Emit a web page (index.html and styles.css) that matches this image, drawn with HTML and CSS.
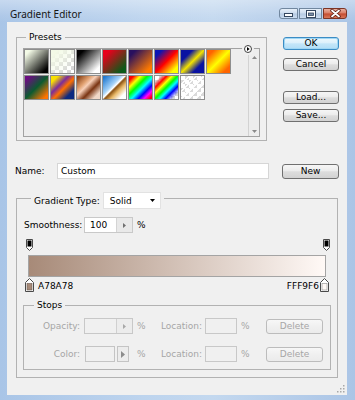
FILE: index.html
```html
<!DOCTYPE html>
<html lang="en">
<head>
<meta charset="utf-8">
<title>Gradient Editor</title>
<link rel="stylesheet" href="styles.css">
</head>
<body>
<div class="window">
  <div class="titlebar">
    <span class="title">Gradient Editor</span>
    <div class="caption-buttons">
      <span class="cap cap-min"><svg width="9" height="4" viewBox="0 0 9 4"><rect x="0.5" y="0.5" width="8" height="3" fill="#fff" stroke="#34465f"/></svg></span>
      <span class="cap cap-max"><svg width="10" height="8" viewBox="0 0 10 8"><rect x="0.5" y="0.5" width="9" height="7" fill="#fff" stroke="#34465f"/><rect x="2.5" y="3" width="5" height="2.5" fill="#7a8ca6" stroke="#34465f" stroke-width="0.8"/></svg></span>
      <span class="cap cap-close"><svg width="11" height="9" viewBox="0 0 11 9"><path d="M2 1.5 L9 7.5 M9 1.5 L2 7.5" stroke="#5a1c12" stroke-width="3.4" stroke-linecap="round"/><path d="M2 1.5 L9 7.5 M9 1.5 L2 7.5" stroke="#fff" stroke-width="1.8" stroke-linecap="round"/></svg></span>
    </div>
  </div>

  <div class="client">
    <div class="top">
      <fieldset class="group presets">
        <legend>Presets</legend>
        <span class="menu-btn"><svg width="8" height="8" viewBox="0 0 8 8"><circle cx="4" cy="4" r="3.5" fill="#fff" stroke="#404040"/><path d="M3 2 L5.6 4 L3 6 Z" fill="#000"/></svg></span>
        <div class="preset-list">
          <div class="swatches">
            <span class="sw s1"></span>
            <span class="sw s2"></span>
            <span class="sw s3"></span>
            <span class="sw s4"></span>
            <span class="sw s5"></span>
            <span class="sw s6"></span>
            <span class="sw s7"></span>
            <span class="sw s8"></span>
            <span class="sw s9"></span>
            <span class="sw s10"></span>
            <span class="sw s11"></span>
            <span class="sw s12"></span>
            <span class="sw s13"></span>
            <span class="sw s14"></span>
            <span class="sw s15"></span>
          </div>
          <div class="scrollbar">
            <svg width="5" height="3" viewBox="0 0 5 3"><path d="M0 3 L2.5 0 L5 3 Z" fill="#8a8a8a"/></svg>
            <svg width="5" height="3" viewBox="0 0 5 3"><path d="M0 0 L2.5 3 L5 0 Z" fill="#8a8a8a"/></svg>
          </div>
        </div>
      </fieldset>
      <div class="buttons">
        <button class="btn default">OK</button>
        <button class="btn cancel">Cancel</button>
        <button class="btn load">Load...</button>
        <button class="btn save">Save...</button>
      </div>
    </div>

    <div class="name-row">
      <span class="name-label">Name:</span>
      <span class="text-field">Custom</span>
      <button class="btn new">New</button>
    </div>

    <fieldset class="group gradient">
      <legend>
        <span class="type-label">Gradient Type:</span>
        <span class="select"><span>Solid</span><svg width="5" height="3" viewBox="0 0 5 3"><path d="M0 0 H5 L2.5 3 Z" fill="#000"/></svg></span>
      </legend>

      <div class="smooth-row">
        <span class="smooth-label">Smoothness:</span>
        <span class="spin"><span class="val">100</span><span class="spin-btn"><svg width="3" height="5" viewBox="0 0 3 5"><path d="M0 0 L3 2.5 L0 5 Z" fill="#707070"/></svg></span></span>
        <span class="pct">%</span>
      </div>

      <div class="stops-top">
        <svg width="7" height="12" viewBox="0 0 7 12"><path d="M0.5 0.5 H6.5 V8.5 L3.5 11.5 L0.5 8.5 Z" fill="#fff" stroke="#4a4a4a"/><rect x="1.5" y="1.5" width="4" height="6" fill="#000"/></svg>
        <svg width="7" height="12" viewBox="0 0 7 12"><path d="M0.5 0.5 H6.5 V8.5 L3.5 11.5 L0.5 8.5 Z" fill="#fff" stroke="#4a4a4a"/><rect x="1.5" y="1.5" width="4" height="6" fill="#000"/></svg>
      </div>

      <div class="bar"></div>

      <div class="stops-bottom">
        <svg width="9" height="14" viewBox="0 0 9 14"><path d="M0.5 13.5 V4.5 L4.5 0.5 L8.5 4.5 V13.5 Z" fill="#fff" stroke="#4a4a4a"/><rect x="2" y="5.5" width="5" height="6.5" fill="#a78a78" stroke="#6a5a52" stroke-width="0.6"/></svg>
        <span class="stop-label left">A78A78</span>
        <span class="stop-label right">FFF9F6</span>
        <svg width="9" height="14" viewBox="0 0 9 14"><path d="M0.5 13.5 V4.5 L4.5 0.5 L8.5 4.5 V13.5 Z" fill="#fff" stroke="#4a4a4a"/><rect x="2" y="5.5" width="5" height="6.5" fill="#fff9f6" stroke="#8a8a8a" stroke-width="0.6"/></svg>
      </div>

      <fieldset class="group stops">
        <legend>Stops</legend>
        <div class="stops-grid">
          <span class="lbl right">Opacity:</span>
          <span class="spin dis"><span class="val"></span><span class="spin-btn"><svg width="3" height="5" viewBox="0 0 3 5"><path d="M0 0 L3 2.5 L0 5 Z" fill="#a8a8a8"/></svg></span></span>
          <span class="lbl pad">%</span>
          <span class="lbl">Location:</span>
          <span class="field dis"></span>
          <span class="lbl pad">%</span>
          <button class="btn del" disabled>Delete</button>

          <span class="lbl right">Color:</span>
          <span class="color-pick"><span class="color-box"></span><span class="color-arrow"><svg width="4" height="7" viewBox="0 0 4 7"><path d="M0 0 L4 3.5 L0 7 Z" fill="#8c8c8c"/></svg></span></span>
          <span class="lbl pad">%</span>
          <span class="lbl">Location:</span>
          <span class="field dis"></span>
          <span class="lbl pad">%</span>
          <button class="btn del" disabled>Delete</button>
        </div>
      </fieldset>
    </fieldset>

    <span class="grip"><svg width="8" height="8" viewBox="0 0 8 8"><g fill="#a8a8a8"><rect x="6" y="0" width="1.5" height="1.5"/><rect x="3" y="3" width="1.5" height="1.5"/><rect x="6" y="3" width="1.5" height="1.5"/><rect x="0" y="6" width="1.5" height="1.5"/><rect x="3" y="6" width="1.5" height="1.5"/><rect x="6" y="6" width="1.5" height="1.5"/></g></svg></span>
  </div>
</div>
</body>
</html>
```

FILE: styles.css
```css
* { box-sizing: border-box; }
html, body { margin: 0; padding: 0; }
body {
  width: 355px;
  height: 400px;
  overflow: hidden;
  font: 9px/12px "DejaVu Sans", "Liberation Sans", sans-serif;
  color: #000;
  background: #b8cfea;
}

/* ---------- window frame ---------- */
.window {
  width: 355px;
  height: 400px;
  display: flex;
  flex-direction: column;
  padding: 0 8px 5px 7px;
  background: linear-gradient(to right, #a9c5e7 0%, #bdd4ee 40%, #c3d8ef 60%, #abc5e6 100%);
}
.titlebar {
  flex: 0 0 22px;
  margin: 0 -8px 0 -7px;
  padding: 0 8px 0 10px;
  display: flex;
  align-items: flex-start;
  background: linear-gradient(to bottom, rgba(255,255,255,.35), rgba(255,255,255,.08) 70%, rgba(255,255,255,0));
}
.title {
  font-family: "Noto Sans", sans-serif;
  font-size: 10px;
  line-height: 12px;
  margin-top: 8px;
  color: #151515;
}
.caption-buttons {
  margin-left: auto;
  margin-top: 8px;
  display: flex;
  gap: 1px;
}
.cap {
  height: 11px;
  display: flex;
  align-items: center;
  justify-content: center;
  border: 1px solid #71879f;
  background: linear-gradient(#e6eff9, #cddcee 48%, #b5cae3 52%, #cbdcf0);
}
.cap-min { width: 19px; border-radius: 3px 0 0 3px; align-items: flex-end; padding-bottom: 1px; }
.cap-max { width: 23px; }
.cap-close {
  width: 24px;
  border-color: #7d3424;
  border-radius: 0 3px 3px 0;
  background: linear-gradient(#eab0a0, #d97a62 48%, #c44a2e 52%, #d87658);
}

/* ---------- client area ---------- */
.client {
  flex: 1;
  position: relative;
  background: #f0f0f0;
}

.group {
  margin: 0;
  border: 1px solid #b2b2b2;
  min-inline-size: 0;
}
.group > legend {
  line-height: 12px;
  padding: 0 3px;
}

.top { display: flex; align-items: flex-start; }

.presets {
  position: relative;
  width: 251px;
  margin: 9px 0 0 9px;
  padding: 5px 6px 3px 6px;
}
.presets > legend { margin-left: 3px; }
.menu-btn {
  position: absolute;
  top: 2px;
  right: 14px;
  width: 8px;
  height: 8px;
  display: flex;
  border-radius: 50%;
  box-shadow: 0 0 0 2px #f0f0f0;
  background: #f0f0f0;
}
.preset-list {
  display: flex;
  height: 89px;
  border: 1px solid #a2a2a2;
  background: #ededed;
}
.swatches {
  flex: 1;
  display: grid;
  grid-template-columns: repeat(8, 25px);
  grid-auto-rows: 25px;
  gap: 1px;
  align-content: start;
}
.sw { display: block; border: 1px solid #8e8e8e; }
.scrollbar {
  width: 11px;
  border-left: 1px solid #d2d2d2;
  display: flex;
  flex-direction: column;
  align-items: center;
  justify-content: space-between;
  padding: 7px 0 3px;
}

.checker, .s2, .s14, .s15 {
  background-color: #fff;
}
.s1 { background: linear-gradient(135deg, #f3fae6 12%, #000 88%); }
.s2 { background: linear-gradient(135deg, #f3fae6 15%, rgba(243,250,230,0) 85%), repeating-conic-gradient(#d6d6d6 0 25%, #fff 0 50%) 0 0 / 8px 8px; }
.s3 { background: linear-gradient(135deg, #000 15%, #fff 85%); }
.s4 { background: linear-gradient(135deg, #e8001c 15%, #0b5a18 85%); }
.s5 { background: linear-gradient(135deg, #28105e 15%, #ff7a00 85%); }
.s6 { background: linear-gradient(135deg, #0a14b4 15%, #ff0000 50%, #ffff00 85%); }
.s7 { background: linear-gradient(135deg, #0a12a2 25%, #f2e200 50%, #0a12a2 75%); }
.s8 { background: linear-gradient(135deg, #ff6400 15%, #ffff00 50%, #ff6400 85%); }
.s9 { background: linear-gradient(135deg, #6c0c82 10%, #0c5a30 50%, #ff7400 90%); }
.s10 { background: linear-gradient(135deg, #f8e000 15%, #7a2c9c 38%, #ff7000 55%, #0c2a80 80%); }
.s11 { background: linear-gradient(135deg, #8c4418 5%, #e0a070 30%, #f8d0b8 42%, #7a3412 62%, #f0d8c8 85%); }
.s12 { background: linear-gradient(135deg, #1e78d0 5%, #a8d4f8 40%, #fff 48%, #8a5010 53%, #e8b868 66%, #fff 85%); }
.s13 { background: linear-gradient(135deg, #f00 10%, #ff0 25%, #0f0 40%, #0ff 55%, #00f 70%, #f0f 82%, #f00 95%); }
.s14 { background: linear-gradient(135deg, rgba(255,0,0,0) 12%, #f00 25%, #ff0 37%, #0f0 49%, #0ff 60%, #00f 72%, rgba(255,0,255,0) 88%), repeating-conic-gradient(#d6d6d6 0 25%, #fff 0 50%) 0 0 / 8px 8px; }
.s15 { background: repeating-linear-gradient(135deg, rgba(255,255,255,.95) 0 2px, rgba(255,255,255,0) 2px 5px), repeating-conic-gradient(#dadada 0 25%, #fff 0 50%) 0 0 / 8px 8px; }

/* ---------- buttons ---------- */
.btn {
  font: inherit;
  color: #000;
  padding: 0;
  margin: 0;
  border: 1px solid #707070;
  border-radius: 3px;
  background: linear-gradient(#f6f6f6, #ececec 45%, #dddddd 52%, #d2d2d2);
  line-height: 11px;
  height: 13px;
  display: flex;
  align-items: center;
  justify-content: center;
}
.buttons {
  width: 56px;
  margin: 15px 0 0 16px;
  display: flex;
  flex-direction: column;
}
.buttons .btn { width: 56px; }
.btn.default {
  border-color: #3c8cc4;
  background: linear-gradient(#eef8fd, #dcf0fb 45%, #c4e6f9 52%, #b2ddf6);
  box-shadow: inset 0 0 0 1px #9fd7f5;
}
.btn.cancel { margin-top: 8px; }
.btn.load { margin-top: 20px; }
.btn.save { margin-top: 5px; }

/* ---------- name row ---------- */
.name-row {
  display: flex;
  align-items: center;
  margin-top: 22px;
  padding-left: 8px;
  height: 16px;
}
.name-label { width: 42px; }
.text-field {
  width: 212px;
  height: 16px;
  border: 1px solid #d6d6d6;
  background: #fff;
  padding-left: 3px;
  line-height: 14px;
}
.btn.new { width: 57px; height: 15px; margin-left: 13px; }

/* ---------- gradient group ---------- */
.gradient {
  width: 322px;
  margin: 9px 0 0 9px;
  padding: 8px 6px 7px 6px;
}
.gradient > legend {
  display: flex;
  align-items: center;
  margin-left: 8px;
  padding: 4px 3px 0 3px;
}
.type-label { margin-right: 3px; }
.select {
  width: 58px;
  height: 17px;
  display: flex;
  align-items: center;
  justify-content: space-between;
  padding: 0 5px 0 6px;
  background: #fff;
  border: 1px solid #e2e2e2;
}

.smooth-row {
  display: flex;
  align-items: center;
  height: 16px;
  padding-left: 1px;
}
.smooth-label { width: 60px; }
.spin {
  display: flex;
  width: 49px;
  height: 16px;
  border: 1px solid #c9c9c9;
  background: #fff;
}
.spin .val { flex: 1; padding-left: 5px; line-height: 14px; }
.spin-btn {
  width: 16px;
  display: flex;
  align-items: center;
  justify-content: center;
  border-left: 1px solid #d4d4d4;
  background: #e9e9e9;
}
.pct { margin-left: 4px; }

.stops-top {
  display: flex;
  justify-content: space-between;
  margin-top: 6px;
  height: 12px;
  padding: 0 1px 0 3px;
}
.stops-top svg, .stops-bottom svg { display: block; }
.bar {
  margin: 4px 5px 0 5px;
  height: 22px;
  border: 1px solid #a4a4a4;
  background: linear-gradient(to right, #a78a78, #fff9f6);
}
.stops-bottom {
  display: flex;
  align-items: flex-end;
  margin-top: 1px;
  height: 14px;
  padding: 0 2px;
}
.stop-label { line-height: 11px; }
.stop-label.left { margin-left: 4px; }
.stop-label.right { margin-left: auto; margin-right: 1px; }

/* ---------- stops group ---------- */
.stops {
  width: 308px;
  margin-top: 7px;
  padding: 7px 0 7px 0;
}
.stops > legend { margin-left: 10px; }
.stops-grid {
  display: grid;
  grid-template-columns: 60px 49px 28px 44px 32px 29px 57px;
  row-gap: 12px;
  align-items: center;
  color: #a6a6a6;
}
.lbl.right { text-align: right; padding-right: 4px; }
.lbl.pad { padding-left: 4px; }
.spin.dis { background: #f0f0f0; border-color: #c8c8c8; }
.spin.dis .spin-btn { background: #ececec; border-left-color: #d0d0d0; }
.field.dis {
  height: 16px;
  border: 1px solid #c8c8c8;
  background: #f0f0f0;
}
.color-pick { display: flex; height: 16px; }
.color-box {
  width: 30px;
  margin-left: 1px;
  border: 1px solid #c4c4c4;
  background: #f0f0f0;
}
.color-arrow {
  width: 12px;
  margin-left: 2px;
  border: 1px solid #c4c4c4;
  display: flex;
  align-items: center;
  justify-content: center;
  background: #ececec;
}
.btn.del {
  width: 57px;
  height: 15px;
  color: #a6a6a6;
  border-color: #bcbcbc;
  background: linear-gradient(#f7f7f7, #f0f0f0 50%, #ebebeb);
}

.grip {
  position: absolute;
  right: 2px;
  bottom: 2px;
  display: flex;
}
```
